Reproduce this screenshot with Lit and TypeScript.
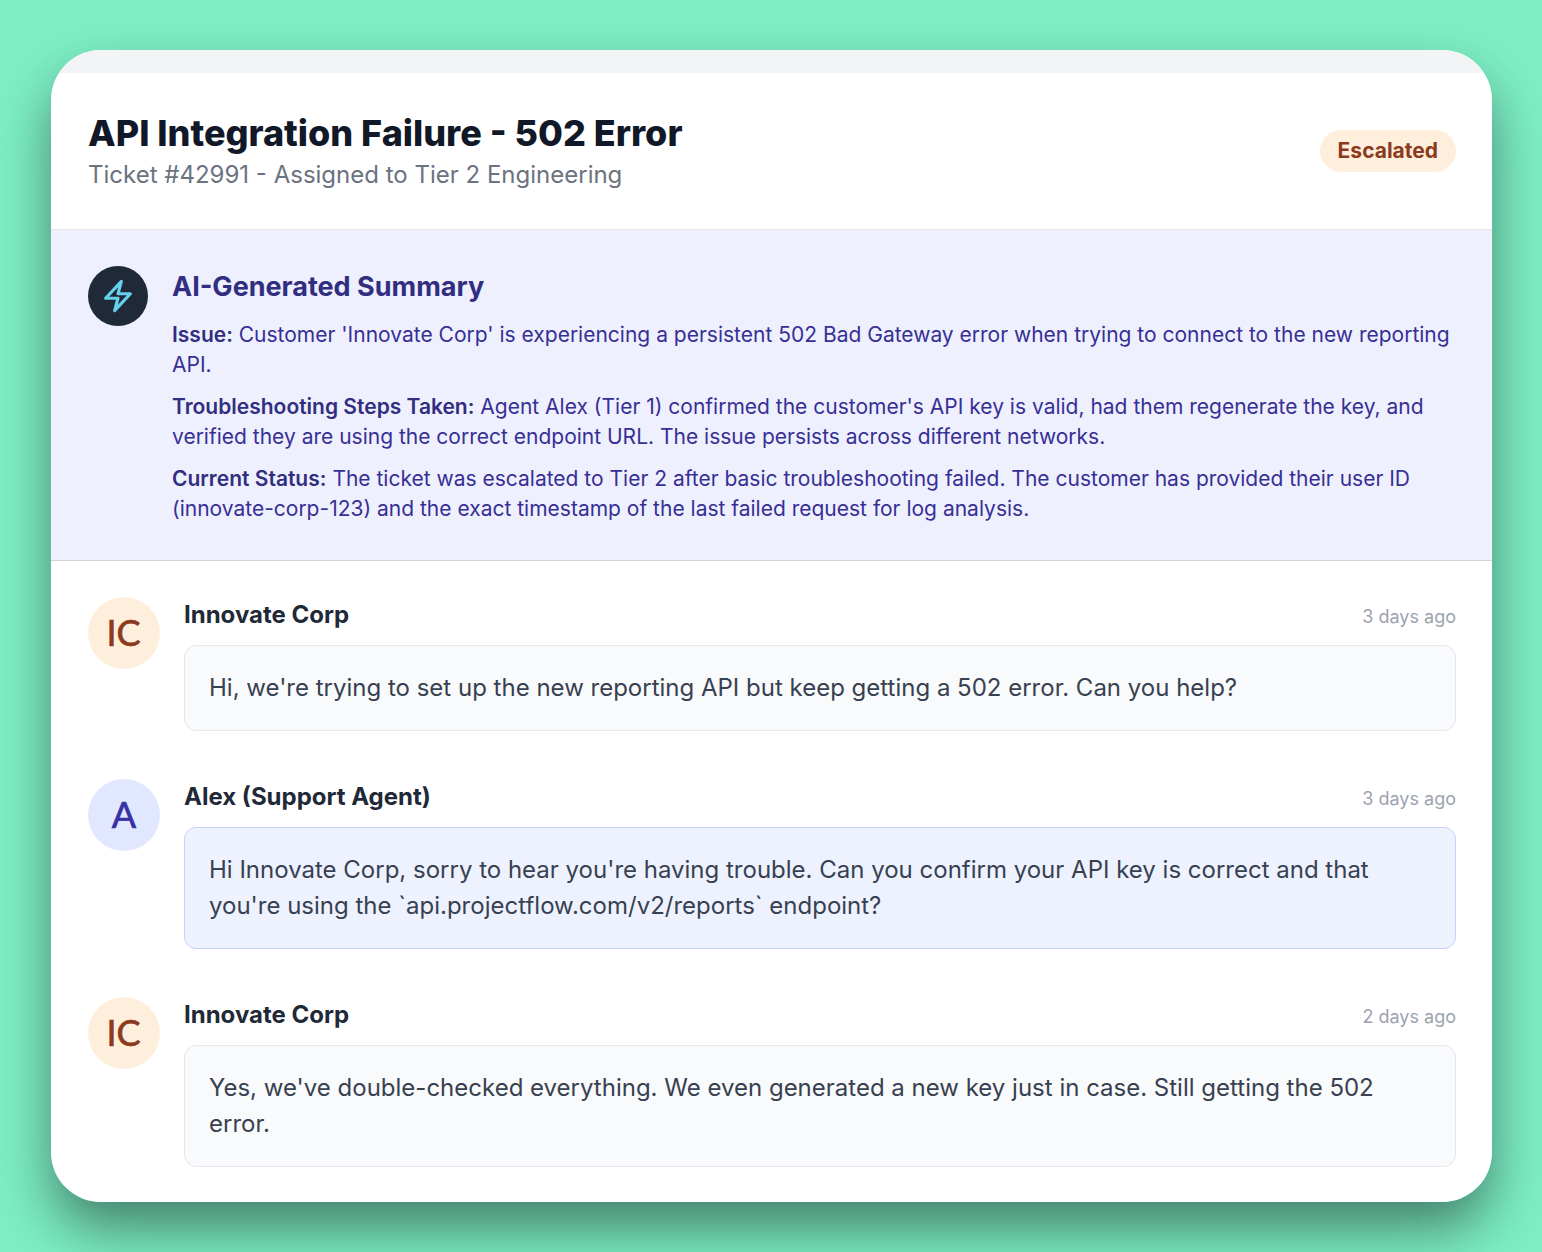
import { LitElement, html, css } from "lit";
import { customElement } from "lit/decorators.js";

type Msg = { who: string; time: string; text: string; kind: "cust" | "agent"; initials: string };

const MSGS: Msg[] = [
  { who: "Innovate Corp", time: "3 days ago", kind: "cust", initials: "IC", text: "Hi, we're trying to set up the new reporting API but keep getting a 502 error. Can you help?" },
  { who: "Alex (Support Agent)", time: "3 days ago", kind: "agent", initials: "A", text: "Hi Innovate Corp, sorry to hear you're having trouble. Can you confirm your API key is correct and that you're using the \`api.projectflow.com/v2/reports\` endpoint?" },
  { who: "Innovate Corp", time: "2 days ago", kind: "cust", initials: "IC", text: "Yes, we've double-checked everything. We even generated a new key just in case. Still getting the 502 error." },
];

@customElement("app-root")
export class AppRoot extends LitElement {
  static styles = css`
    :host {
      display: block;
      width: 1542px;
      height: 1252px;
      background: #7deec5;
      font-family: Inter, "Noto Sans", sans-serif;
      padding: 50px 51px;
      box-sizing: border-box;
      overflow: hidden;
    }
    .wrap {
      width: 1441px;
      height: 1152px;
      border-radius: 50px;
      box-shadow: 0 25px 50px -12px rgba(0,0,0,.25), 0 30px 60px rgba(0,0,0,.3);
    }
    .card {
      width: 100%;
      height: 100%;
      border-radius: 50px;
      background: #fff;
      overflow: hidden;
    }
    .band { height: 23px; background: #f3f4f6; }
    .header {
      height: 157px;
      box-sizing: border-box;
      padding: 38px 36px 0 37px;
      display: flex;
      justify-content: space-between;
      align-items: flex-start;
      border-bottom: 1px solid #e5e7eb;
    }
    h1 { margin: 0; font-size: 36px; line-height: 44px; font-weight: 800; color: #111827; }
    .sub { margin-top: 6px; font-size: 24px; line-height: 28px; color: #6b7280; }
    .badge {
      margin-top: 19px;
      height: 42px;
      padding: 0 18px;
      border-radius: 21px;
      background: #feefdc;
      color: #8b3a1e;
      font-size: 21px;
      font-weight: 700;
      line-height: 42px;
    }
    .summary {
      height: 331px;
      box-sizing: border-box;
      background: #eef0fd;
      border-bottom: 1px solid #d1d5db;
      padding: 36px 36px 0 37px;
      display: flex;
      gap: 24px;
    }
    .bolt {
      width: 60px; height: 60px; flex: none; border-radius: 50%;
      background: #1f2937;
      display: flex; align-items: center; justify-content: center;
    }
    .sum-body { flex: 1; min-width: 0; color: #372f96; font-size: 21px; line-height: 30px; padding-top: 1px; }
    h2 { margin: 0 0 13px; font-size: 27px; line-height: 40px; font-weight: 700; color: #312e81; }
    .sum-body p { margin: 0 0 12px; }
    .sum-body b { font-weight: 600; color: #312e81; }
    .msgs { padding: 36px 36px 0 37px; display: flex; flex-direction: column; gap: 48px; }
    .msg { display: flex; gap: 24px; }
    .avatar {
      width: 72px; height: 72px; flex: none; border-radius: 50%;
      display: flex; align-items: center; justify-content: center;
      font-family: Lato, sans-serif;
      font-size: 36px; font-weight: 400;
      -webkit-text-stroke: 0.7px currentColor;
      padding: 0 1px 2px 0;
      box-sizing: border-box;
    }
    .cust .avatar { background: #feefdc; color: #8b3a1e; }
    .agent .avatar { background: #e0e7ff; color: #3730a3; padding-right: 0; }
    .content { flex: 1; min-width: 0; }
    .top { display: flex; justify-content: space-between; align-items: baseline; height: 36px; margin-bottom: 12px; }
    .name { font-size: 24px; line-height: 36px; font-weight: 700; color: #1f2937; }
    .time { font-size: 18px; color: #9ca3af; }
    .bubble {
      border-radius: 12px;
      padding: 23.5px 24px 24.5px;
      font-size: 24px;
      line-height: 36px;
      color: #374151;
      border: 1px solid #e5e7eb;
      background: #f9fafb;
    }
    .agent .bubble { background: #eef2ff; border-color: #c7d2fe; }
  `;

  render() {
    return html`
      <div class="wrap">
        <div class="card">
          <div class="band"></div>
          <div class="header">
            <div>
              <h1>API Integration Failure - 502 Error</h1>
              <div class="sub">Ticket #42991 - Assigned to Tier 2 Engineering</div>
            </div>
            <div class="badge">Escalated</div>
          </div>
          <div class="summary">
            <div class="bolt">
              <svg width="36" height="36" viewBox="0 0 24 24" fill="none" stroke="#67d0ea" stroke-width="2.1" stroke-linecap="round" stroke-linejoin="round">
                <path d="M3.75 13.5l10.5-11.25L12 10.5h8.25L9.75 21.75 12 13.5H3.75z" />
              </svg>
            </div>
            <div class="sum-body">
              <h2>AI-Generated Summary</h2>
              <p><b>Issue:</b> Customer 'Innovate Corp' is experiencing a persistent 502 Bad Gateway error when trying to connect to the new reporting API.</p>
              <p><b>Troubleshooting Steps Taken:</b> Agent Alex (Tier 1) confirmed the customer's API key is valid, had them regenerate the key, and verified they are using the correct endpoint URL. The issue persists across different networks.</p>
              <p><b>Current Status:</b> The ticket was escalated to Tier 2 after basic troubleshooting failed. The customer has provided their user ID (innovate-corp-123) and the exact timestamp of the last failed request for log analysis.</p>
            </div>
          </div>
          <div class="msgs">
            ${MSGS.map(
              (m) => html`
                <div class="msg ${m.kind}">
                  <div class="avatar">${m.initials}</div>
                  <div class="content">
                    <div class="top">
                      <div class="name">${m.who}</div>
                      <div class="time">${m.time}</div>
                    </div>
                    <div class="bubble">${m.text}</div>
                  </div>
                </div>
              `
            )}
          </div>
        </div>
      </div>
    `;
  }
}
